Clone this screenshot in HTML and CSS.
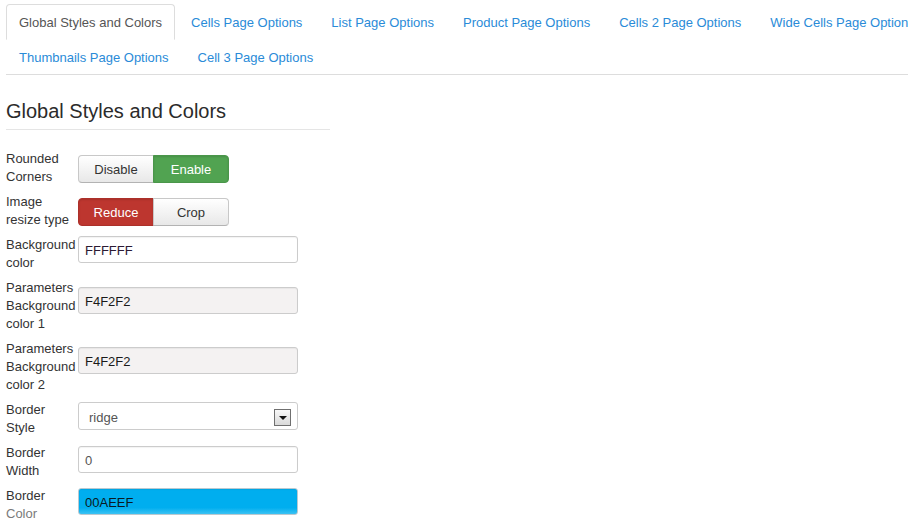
FILE: index.html
```html
<!DOCTYPE html>
<html>
<head>
<meta charset="utf-8">
<title>Global Styles and Colors</title>
<link rel="stylesheet" href="styles.css">
</head>
<body>
<div class="page">
  <ul class="tabs">
    <li><a class="tab active">Global Styles and Colors</a></li>
    <li><a class="tab">Cells Page Options</a></li>
    <li><a class="tab">List Page Options</a></li>
    <li><a class="tab">Product Page Options</a></li>
    <li><a class="tab">Cells 2 Page Options</a></li>
    <li><a class="tab">Wide Cells Page Options</a></li>
    <li><a class="tab">Thumbnails Page Options</a></li>
    <li><a class="tab">Cell 3 Page Options</a></li>
  </ul>

  <h3 class="section-title">Global Styles and Colors</h3>

  <div class="form">
    <div class="row">
      <div class="label">Rounded Corners</div>
      <div class="btn-group ctl-btn">
        <span class="btn">Disable</span>
        <span class="btn btn-success">Enable</span>
      </div>
    </div>
    <div class="row">
      <div class="label">Image resize type</div>
      <div class="btn-group ctl-btn">
        <span class="btn btn-danger">Reduce</span>
        <span class="btn">Crop</span>
      </div>
    </div>
    <div class="row">
      <div class="label">Background color</div>
      <div class="input ctl-flat">FFFFFF</div>
    </div>
    <div class="row">
      <div class="label">Parameters Background color 1</div>
      <div class="input input-grey ctl-tall">F4F2F2</div>
    </div>
    <div class="row">
      <div class="label">Parameters Background color 2</div>
      <div class="input input-grey ctl-tall2">F4F2F2</div>
    </div>
    <div class="row">
      <div class="label">Border Style</div>
      <div class="select ctl-input">
        <span class="select-text">ridge</span>
        <span class="select-arrow"><span class="caret"></span></span>
      </div>
    </div>
    <div class="row">
      <div class="label">Border Width</div>
      <div class="input input-plain ctl-input2">0</div>
    </div>
    <div class="row">
      <div class="label">Border <span class="faded">Color</span></div>
      <div class="input input-blue ctl-input">00AEEF</div>
    </div>
  </div>
</div>
</body>
</html>
```

FILE: styles.css
```css
html, body {
  margin: 0;
  padding: 0;
  overflow: hidden;
  background: #fff;
}

body {
  font-family: "Liberation Sans", Arial, sans-serif;
  font-size: 13px;
  color: #333;
}

.page {
  padding: 4px 0 0 6px;
}

.tabs {
  list-style: none;
  margin: 0;
  padding: 0;
  width: 980px;
  display: flex;
  flex-wrap: wrap;
  border-bottom: 1px solid #ddd;
}

.tabs li {
  margin-bottom: -1px;
}

.tab {
  display: block;
  padding: 8px 12px 6px 12px;
  line-height: 20px;
  margin-right: 3px;
  border: 1px solid transparent;
  border-radius: 4px 4px 0 0;
  color: #2a8bd8;
  white-space: nowrap;
}

.tab.active {
  color: #555;
  background: #fff;
  border-color: #ddd #ddd transparent #ddd;
}

.section-title {
  margin: 24px 0 0 0;
  width: 324px;
  font-size: 20px;
  line-height: 24px;
  font-weight: normal;
  color: #2b2b2b;
  padding-bottom: 6px;
  border-bottom: 1px solid #e5e5e5;
}

.form {
  margin-top: 20px;
}

.row {
  display: flex;
  align-items: flex-start;
  margin-bottom: 7px;
}

.label {
  flex: 0 0 72px;
  box-sizing: border-box;
  padding-right: 2px;
  line-height: 18px;
  color: #333;
}

.faded {
  color: #7a7a7a;
}

.ctl-btn { margin-top: 5px; }
.ctl-flat { margin-top: 0; }
.ctl-tall { margin-top: 8px; }
.ctl-tall2 { margin-top: 7px; }
.ctl-input { margin-top: 1px; }
.ctl-input2 { margin-top: 2px; }

.btn-group {
  display: flex;
}

.btn {
  display: block;
  box-sizing: border-box;
  width: 76px;
  height: 28px;
  padding-top: 1px;
  line-height: 26px;
  text-align: center;
  color: #333;
  background: linear-gradient(#ffffff, #e8e8e8);
  border: 1px solid #c8c8c8;
  border-bottom-color: #b3b3b3;
}

.btn:first-child {
  border-radius: 4px 0 0 4px;
}

.btn + .btn {
  margin-left: -1px;
  border-radius: 0 4px 4px 0;
}

.btn-success {
  background: #51a351;
  color: #fff;
  border-color: #4a964a;
  box-shadow: inset 0 1px 2px rgba(0, 0, 0, 0.12);
}

.btn-danger {
  background: #bd362f;
  color: #fff;
  border-color: #ac302a;
  box-shadow: inset 0 1px 2px rgba(0, 0, 0, 0.12);
}

.input {
  box-sizing: border-box;
  width: 220px;
  height: 27px;
  line-height: 25px;
  padding: 1px 6px 0 6px;
  border: 1px solid #ccc;
  border-radius: 3px;
  background: #fff;
  color: #2c1a33;
  overflow: hidden;
  box-shadow: inset 0 1px 1px rgba(0, 0, 0, 0.05);
}

.input-grey {
  background: #f4f2f2;
  color: #1a1a1a;
}

.input-plain {
  color: #555;
}

.input-blue {
  background: linear-gradient(#00aeef 0%, #00aeef 75%, #3cc2f3 100%);
  border-color: #b9c9d0;
  color: #0a1a22;
}

.select {
  box-sizing: border-box;
  width: 220px;
  height: 28px;
  border: 1px solid #ccc;
  border-radius: 3px;
  background: #fff;
  display: flex;
  align-items: center;
  justify-content: space-between;
  padding: 2px 6px 0 10px;
}

.select-text {
  color: #555;
}

.select-arrow {
  box-sizing: border-box;
  width: 17px;
  height: 17px;
  border: 1px solid #6f6f6f;
  background: linear-gradient(#f8f8f8, #d9d9d9);
  display: flex;
  align-items: center;
  justify-content: center;
}

.caret {
  width: 0;
  height: 0;
  border-top: 4px solid #111;
  border-left: 4px solid transparent;
  border-right: 4px solid transparent;
  margin-top: 1px;
}
```
